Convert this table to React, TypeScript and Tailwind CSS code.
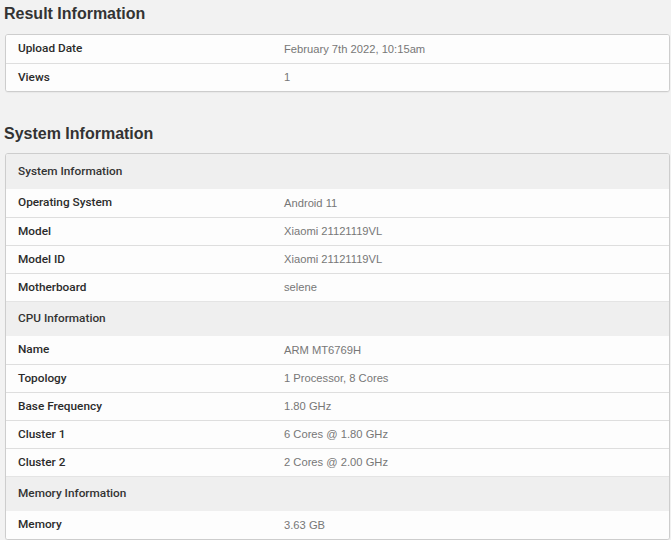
import React from "react";

type Row = { label: string; value?: string; header?: boolean };

const resultRows: Row[] = [
  { label: "Upload Date", value: "February 7th 2022, 10:15am" },
  { label: "Views", value: "1" },
];

const systemRows: Row[] = [
  { label: "System Information", header: true },
  { label: "Operating System", value: "Android 11" },
  { label: "Model", value: "Xiaomi 21121119VL" },
  { label: "Model ID", value: "Xiaomi 21121119VL" },
  { label: "Motherboard", value: "selene" },
  { label: "CPU Information", header: true },
  { label: "Name", value: "ARM MT6769H" },
  { label: "Topology", value: "1 Processor, 8 Cores" },
  { label: "Base Frequency", value: "1.80 GHz" },
  { label: "Cluster 1", value: "6 Cores @ 1.80 GHz" },
  { label: "Cluster 2", value: "2 Cores @ 2.00 GHz" },
  { label: "Memory Information", header: true },
  { label: "Memory", value: "3.63 GB" },
];

function InfoTable({ rows }: { rows: Row[] }) {
  return (
    <div className="ml-[5px] w-[665px] rounded-[3px] border border-[#cdcdcd] bg-white overflow-hidden shadow-[0_1px_1px_rgba(0,0,0,0.04)]">
      {rows.map((r, i) => {
        const prevHeader = i > 0 && rows[i - 1].header;
        if (r.header) {
          return (
            <div
              key={i}
              className={`h-[35px] flex items-center pl-[12px] bg-[#efefef] text-[11.8px] font-medium text-[#333] font-['Roboto',sans-serif] ${i > 0 ? "border-t border-[#e4e4e4]" : ""}`}
            >
              {r.label}
            </div>
          );
        }
        return (
          <div
            key={i}
            className={`h-[28px] grid grid-cols-[278px_1fr] items-center bg-[#fdfdfd] ${i > 0 && !prevHeader ? "border-t border-[#dedede]" : ""}`}
          >
            <div className="pl-[12px] text-[11.8px] font-medium text-[#2b2b2b] font-['Roboto',sans-serif]">{r.label}</div>
            <div className="text-[11.2px] text-[#777] font-['Liberation_Sans',Arial,sans-serif]">{r.value}</div>
          </div>
        );
      })}
    </div>
  );
}

export default function App() {
  return (
    <div className="min-h-[540px] bg-[#f2f2f2] font-['Liberation_Sans',Arial,sans-serif] overflow-hidden">
      <h2 className="pl-[4px] h-[27px] leading-[27px] text-[16px] font-bold text-[#333]">Result Information</h2>
      <div className="mt-[7px]">
        <InfoTable rows={resultRows} />
      </div>
      <h2 className="mt-[28px] pl-[4px] h-[27px] leading-[27px] text-[16px] font-bold text-[#333]">System Information</h2>
      <div className="mt-[6px]">
        <InfoTable rows={systemRows} />
      </div>
    </div>
  );
}
